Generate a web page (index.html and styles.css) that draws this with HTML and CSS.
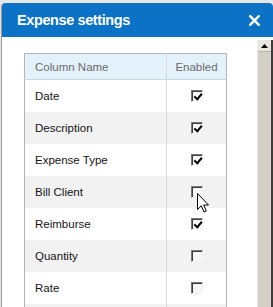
FILE: index.html
```html
<!DOCTYPE html>
<html>
<head>
<meta charset="utf-8">
<link rel="stylesheet" href="styles.css">
</head>
<body>
<div class="dialog">
  <div class="header">
    <span class="title">Expense settings</span>
    <svg class="close" width="11" height="11" viewBox="0 0 11 11"><path d="M1.2 1.2 L9.8 9.8 M9.8 1.2 L1.2 9.8" stroke="#fff" stroke-width="2.4" stroke-linecap="square"/></svg>
  </div>
  <div class="body">
    <div class="content">
      <table class="grid">
        <thead>
          <tr><th class="name">Column Name</th><th class="en">Enabled</th></tr>
        </thead>
        <tbody>
          <tr><td class="name">Date</td><td class="en"><span class="cb on"></span></td></tr>
          <tr class="alt"><td class="name">Description</td><td class="en"><span class="cb on"></span></td></tr>
          <tr><td class="name">Expense Type</td><td class="en"><span class="cb on"></span></td></tr>
          <tr class="alt"><td class="name">Bill Client</td><td class="en"><span class="cb"></span></td></tr>
          <tr><td class="name">Reimburse</td><td class="en"><span class="cb on"></span></td></tr>
          <tr class="alt"><td class="name">Quantity</td><td class="en"><span class="cb"></span></td></tr>
          <tr><td class="name">Rate</td><td class="en"><span class="cb"></span></td></tr>
          <tr class="alt"><td class="name">&nbsp;</td><td class="en"></td></tr>
        </tbody>
      </table>
    </div>
    <div class="scrollbar">
      <div class="sb-up"><svg width="7" height="4" viewBox="0 0 7 4"><path d="M0 4 L3.5 0 L7 4 Z" fill="#000"/></svg></div>
      <div class="sb-track"></div>
    </div>
  </div>
</div>
<svg class="cursor" width="13" height="21" viewBox="0 0 13 21"><path d="M0.5 0.5 L0.5 16.5 L4.3 12.8 L7 19 L9.3 18 L6.7 12 L11.5 12 Z" fill="#fff" stroke="#000" stroke-width="1" stroke-linejoin="miter"/></svg>
</body>
</html>
```
FILE: styles.css
```css
html, body {
  margin: 0;
  padding: 0;
}
body {
  width: 273px;
  height: 307px;
  overflow: hidden;
  background: #e6e6e6;
  font-family: "Liberation Sans", Arial, sans-serif;
  position: relative;
}
.dialog {
  margin: 3px 0 0 1px;
  border-left: 1px solid #9a9a9a;
  height: 304px;
  display: flex;
  flex-direction: column;
  background: #fff;
  border-top-left-radius: 4px;
  border-top-right-radius: 4px;
  overflow: hidden;
}
.header {
  height: 34px;
  flex: none;
  background: #0b72c6;
  display: flex;
  align-items: center;
  justify-content: space-between;
  padding: 0 13px 0 15px;
}
.title {
  color: #fff;
  font-weight: bold;
  font-size: 14.5px;
  letter-spacing: -0.4px;
}
.close {
  display: block;
  margin-top: 1px;
}
.body {
  flex: 1;
  display: flex;
  background: #fff;
}
.content {
  flex: 1;
  padding: 16px 0 0 22px;
}
.grid {
  border-collapse: collapse;
  width: 203px;
  border: 1px solid #b4b4b4;
  font-size: 11.5px;
}
.grid th {
  background: #e3f1fb;
  color: #6b6b6b;
  font-weight: normal;
  height: 25px;
  border-bottom: 1px solid #c9d6de;
  padding: 0;
}
.grid td {
  height: 32px;
  padding: 0;
  color: #141414;
}
.grid .name {
  text-align: left;
  padding-left: 10px;
  width: 131px;
}
.grid .en {
  text-align: center;
  border-left: 1px solid #d8d8d8;
}
.grid tr.alt td {
  background: #f2f2f2;
}
.cb {
  display: inline-block;
  width: 10px;
  height: 10px;
  vertical-align: middle;
  border-top: 1px solid #7a7a7a;
  border-left: 1px solid #7a7a7a;
  border-right: 1px solid #f4f4f4;
  border-bottom: 1px solid #f4f4f4;
  box-shadow: inset 1px 1px 0 #3c3c3c;
  background: #f7f7f7;
  position: relative;
  margin-top: -2px;
}
.cb.on::after {
  content: "";
  position: absolute;
  left: 3px;
  top: 1px;
  width: 3px;
  height: 6px;
  border-right: 2px solid #000;
  border-bottom: 2px solid #000;
  transform: rotate(40deg);
  transform-origin: 60% 60%;
}
.scrollbar {
  width: 13px;
  margin-top: 3px;
  border-right: 2px solid #3c3c3c;
  display: flex;
  flex-direction: column;
  background: #d4d0c8;
  border-left: 1px solid #eeeae3;
}
.sb-up {
  height: 11px;
  display: flex;
  align-items: center;
  justify-content: center;
  background: #e8e6e1;
  border-bottom: 1px solid #b8b4ac;
}
.sb-up svg {
  display: block;
}
.sb-track {
  flex: 1;
  background: #d4d0c8;
}
.cursor {
  position: absolute;
  left: 197px;
  top: 193px;
}
```
